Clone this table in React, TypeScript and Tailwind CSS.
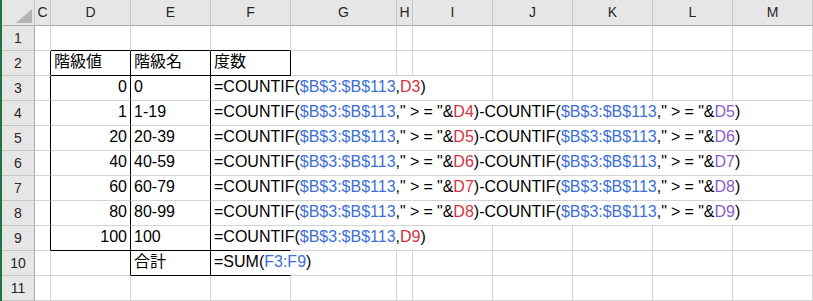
import React from 'react';

type Seg = [string, string];

const FONT = { fontFamily: "'Liberation Sans', 'Noto Sans CJK JP', sans-serif" };

// column widths include the 1px gridline on the right
const COLS = [
  { l: 'C', w: 'w-[16px]' },
  { l: 'D', w: 'w-[80px]' },
  { l: 'E', w: 'w-[80px]' },
  { l: 'F', w: 'w-[80px]' },
  { l: 'G', w: 'w-[106px]' },
  { l: 'H', w: 'w-[16px]' },
  { l: 'I', w: 'w-[80px]' },
  { l: 'J', w: 'w-[80px]' },
  { l: 'K', w: 'w-[80px]' },
  { l: 'L', w: 'w-[80px]' },
  { l: 'M', w: 'w-[80px]' },
];

const K = 'text-black';
const KW = 'text-black tracking-[4.2px]';
const BL = 'text-[#3d6fd6]';
const RD = 'text-[#d2333f]';
const PU = 'text-[#8d5ac8]';
const RANGE = '$B$3:$B$113';

const diff = (n: number): Seg[] => [
  ['=COUNTIF(', K],
  [RANGE, BL],
  [',', K],
  ['">=', KW],
  ['"&', K],
  [`D${n}`, RD],
  [')-COUNTIF(', K],
  [RANGE, BL],
  [',', K],
  ['">=', KW],
  ['"&', K],
  [`D${n + 1}`, PU],
  [')', K],
];

const single = (d: string): Seg[] => [
  ['=COUNTIF(', K],
  [RANGE, BL],
  [',', K],
  [d, RD],
  [')', K],
];

// row -> [D value, E label, F formula]
const DATA: Record<number, { d?: string; e?: string; f?: Seg[] }> = {
  2: { d: '階級値', e: '階級名', f: [['度数', K]] },
  3: { d: '0', e: '0', f: single('D3') },
  4: { d: '1', e: '1-19', f: diff(4) },
  5: { d: '20', e: '20-39', f: diff(5) },
  6: { d: '40', e: '40-59', f: diff(6) },
  7: { d: '60', e: '60-79', f: diff(7) },
  8: { d: '80', e: '80-99', f: diff(8) },
  9: { d: '100', e: '100', f: single('D9') },
  10: { e: '合計', f: [['=SUM(', K], ['F3:F9', BL], [')', K]] },
};

// how far the F text spills to the right (last column index it covers)
const spillTo = (r: number) => {
  if (r === 3 || r === 9) return 6; // into I
  if (r >= 4 && r <= 8) return 10; // into M
  if (r === 10) return 4; // into G
  return 3;
};

function rightBorder(r: number, c: number) {
  // C|D, D|E, E|F table edges
  if (c === 0 && r >= 2 && r <= 9) return 'border-r-black';
  if (c === 1 && r >= 2 && r <= 10) return 'border-r-black';
  if (c === 2 && r >= 2 && r <= 10) return 'border-r-black';
  if (c === 3 && r === 2) return 'border-r-black';
  if (c >= 3 && c < spillTo(r)) return 'border-r-transparent';
  return 'border-r-[#d4d4d4]';
}

function bottomBorder(r: number, c: number) {
  if ((r === 1 || r === 2 || r === 9) && c >= 1 && c <= 3) return 'border-b-black';
  if (r === 10 && (c === 2 || c === 3)) return 'border-b-black';
  return 'border-b-[#d4d4d4]';
}

function CellText({ r, c }: { r: number; c: number }) {
  const row = DATA[r];
  if (!row) return null;
  if (c === 1 && row.d) {
    const isNum = r >= 3;
    return <div className={`px-[3px] ${isNum ? 'text-right' : ''}`}>{row.d}</div>;
  }
  if (c === 2 && row.e) return <div className="px-[3px]">{row.e}</div>;
  if (c === 3 && row.f)
    return (
      <div className="relative z-10 whitespace-nowrap px-[3px]">
        {row.f.map(([t, cl], i) => (
          <span key={i} className={cl}>
            {t}
          </span>
        ))}
      </div>
    );
  return null;
}

export default function App() {
  const rows = Array.from({ length: 11 }, (_, i) => i + 1);
  return (
    <div
      className="w-[813px] h-[301px] overflow-hidden bg-white border-l-2 border-[#217346] text-black"
      style={FONT}
    >
      {/* column headers */}
      <div className="flex h-[26px]">
        <div className="w-[33px] shrink-0 h-full bg-[#e6e6e6] border-r border-b border-r-[#c6c6c6] border-b-[#ababab] flex items-end justify-end pr-[2px] pb-[2px]">
          <svg width="16" height="14" viewBox="0 0 16 14">
            <polygon points="16,0 16,14 0,14" fill="#b4b4b4" />
          </svg>
        </div>
        {COLS.map((col) => (
          <div
            key={col.l}
            className={`${col.w} shrink-0 h-full bg-[#e6e6e6] border-r border-b border-r-[#c6c6c6] border-b-[#ababab] text-center text-[14px] leading-[25px] text-[#262626]`}
          >
            {col.l}
          </div>
        ))}
      </div>

      {rows.map((r) => (
        <div key={r} className="flex h-[25px]">
          <div className="w-[33px] shrink-0 h-full bg-[#e6e6e6] border-r border-b border-r-[#ababab] border-b-[#c6c6c6] text-center text-[14px] leading-[24px] text-[#262626]">
            {r}
          </div>
          {COLS.map((col, c) => (
            <div
              key={col.l}
              className={`${col.w} shrink-0 h-full border-r border-b ${rightBorder(r, c)} ${bottomBorder(
                r,
                c,
              )} text-[16px] leading-[21px] overflow-visible`}
            >
              <CellText r={r} c={c} />
            </div>
          ))}
        </div>
      ))}
    </div>
  );
}
